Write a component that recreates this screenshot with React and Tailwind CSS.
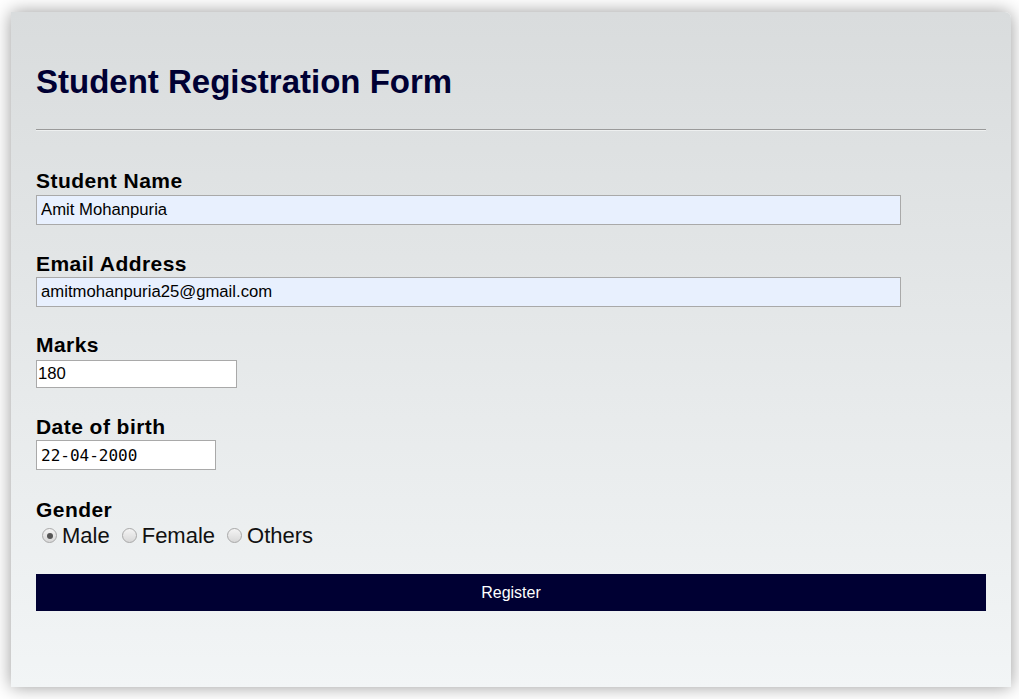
import React from 'react';

function Field({ label, children, className = '' }) {
  return (
    <div className={className}>
      <label className="block text-[21px] tracking-[0.45px] leading-[24px] font-bold text-black mb-[1px]">{label}</label>
      {children}
    </div>
  );
}

function Radio({ label, checked }) {
  return (
    <label className="flex items-center">
      <span className="w-[15px] h-[15px] rounded-full border border-[#a8a8a8] bg-linear-to-b from-[#f4f4f4] to-[#d8d8d8] flex items-center justify-center">
        {checked && <span className="w-[6px] h-[6px] rounded-full bg-[#555]" />}
      </span>
      <span className="ml-[5px] text-[22px] leading-[25px] text-[#111]">{label}</span>
    </label>
  );
}

export default function App() {
  return (
    <div className="min-h-[699px] bg-white pt-[12px] pl-[11px] font-['Liberation_Sans',Arial,sans-serif]">
      <div className="w-[1000px] h-[675px] rounded-tr-[6px] bg-linear-to-b from-[#d9dcdd] to-[#f2f5f6] shadow-[0_0_18px_rgba(0,0,0,0.4)] px-[25px] pt-[51px]">
        <h1 className="text-[33px] leading-[38px] font-bold text-[#000033]">Student Registration Form</h1>
        <div className="mt-[28px] h-[2px] border-t border-[#9a9a9a] border-b border-b-[#eef0f0]" />

        <form className="mt-[38px]" onSubmit={e => e.preventDefault()}>
          <Field label="Student Name">
            <input
              type="text"
              defaultValue="Amit Mohanpuria"
              className="mt-[2px] block w-[865px] h-[30px] border border-[#a9a9a9] bg-[#e8f0fe] px-[4px] text-[16.7px] text-black outline-none"
            />
          </Field>

          <Field label="Email Address" className="mt-[27px]">
            <input
              type="text"
              defaultValue="amitmohanpuria25@gmail.com"
              className="block w-[865px] h-[30px] border border-[#a9a9a9] bg-[#e8f0fe] px-[4px] text-[16.7px] text-black outline-none"
            />
          </Field>

          <Field label="Marks" className="mt-[26px]">
            <input
              type="text"
              defaultValue="180"
              className="mt-[3px] block w-[201px] h-[28px] border border-[#a9a9a9] bg-white px-[1px] text-[16.7px] text-black outline-none"
            />
          </Field>

          <Field label="Date of birth" className="mt-[27px]">
            <input
              type="text"
              defaultValue="22-04-2000"
              className="block w-[180px] h-[30px] border border-[#a9a9a9] bg-white px-[4px] text-[16px] text-black font-['DejaVu_Sans_Mono',monospace] outline-none"
            />
          </Field>

          <div className="mt-[28px]">
            <div className="text-[21px] tracking-[0.45px] leading-[24px] font-bold text-black">Gender</div>
            <div className="flex items-center gap-[12px] pl-[6px] mt-[1px]">
              <Radio label="Male" checked />
              <Radio label="Female" />
              <Radio label="Others" />
            </div>
          </div>

          <button
            type="submit"
            className="mt-[26px] block w-[950px] h-[37px] bg-[#000033] text-white text-[16px]"
          >
            Register
          </button>
        </form>
      </div>
    </div>
  );
}
